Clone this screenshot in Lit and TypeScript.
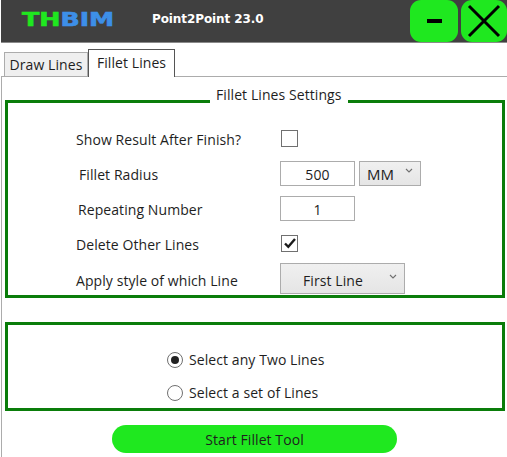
import {LitElement, html, css} from 'lit';
import {customElement} from 'lit/decorators.js';

const chevron = html`<svg class="chevron" width="8" height="5" viewBox="0 0 8 5"><path d="M1 1 L4 4 L7 1" fill="none" stroke="#707070" stroke-width="1.1"/></svg>`;

@customElement('app-root')
export class AppRoot extends LitElement {
    static styles = css`
        :host {
            display: block;
            position: relative;
            width: 507px;
            height: 457px;
            overflow: hidden;
            background: #fff;
            font-family: "Open Sans", "Noto Sans", sans-serif;
            font-size: 14px;
            letter-spacing: 0.08px;
            color: #1e1e1e;
        }

        .header {
            display: flex;
            align-items: stretch;
            height: 42px;
            margin-left: 1px;
            background: #404040;
            border-bottom: 1px solid #8a8a8a;
        }

        .logo {
            width: 90px;
            margin: 8px 0 0 21px;
            font-family: "DejaVu Sans", sans-serif;
            font-weight: 700;
            font-size: 19px;
            line-height: 22px;
            letter-spacing: 0;
            white-space: nowrap;
            transform: scaleX(1.33);
            transform-origin: left top;
            color: #1fe81f;
            -webkit-text-stroke: 0.6px currentColor;
        }

        .logo span {
            color: #3d8fe8;
        }

        .title {
            margin: 11px 0 0 40px;
            font-family: "DejaVu Sans", sans-serif;
            font-weight: 700;
            font-size: 12px;
            line-height: 17px;
            letter-spacing: -0.1px;
            color: #fff;
        }

        .win-buttons {
            display: flex;
            gap: 3px;
            margin-left: auto;
        }

        .win-btn {
            display: flex;
            align-items: center;
            justify-content: center;
            height: 42px;
            background: #1fe81f;
            border-radius: 11px;
        }

        .win-btn.min {
            width: 48px;
        }

        .win-btn.close {
            width: 46px;
        }

        .tabs {
            display: flex;
            align-items: flex-end;
            height: 33px;
            padding-left: 3px;
            border-bottom: 1px solid #acacac;
            margin-left: 1px;
        }

        .tab {
            box-sizing: border-box;
            height: 24px;
            width: 84px;
            border: 1px solid #acacac;
            border-bottom: none;
            background: #efefef;
            text-align: center;
            line-height: 24px;
        }

        .tab.active {
            position: relative;
            top: 1px;
            height: 28px;
            width: 87px;
            border-color: #555;
            background: #fff;
            line-height: 26px;
        }

        .panel {
            box-sizing: border-box;
            height: 380px;
            margin-left: 1px;
            padding: 8px 2px 0 3px;
            border-left: 1px solid #acacac;
        }

        fieldset {
            box-sizing: border-box;
            height: 213px;
            margin: 0;
            padding: 3px 0 0 0;
            border: 3px solid #0a7d0a;
            min-width: 0;
        }

        legend {
            margin-left: 202px;
            padding: 0 6px 14px;
            line-height: 19px;
        }

        .rows {
            display: grid;
            grid-template-columns: 272px 1fr;
            grid-auto-rows: 35px;
            align-items: center;
        }

        .label {
            padding-left: 68px;
            padding-top: 1px;
        }

        .label.in3 {
            padding-left: 71px;
        }

        .label.in2 {
            padding-left: 70px;
        }

        .label.low {
            padding-top: 3px;
        }

        .controls {
            display: flex;
            gap: 4px;
            align-items: center;
        }

        input[type="text"] {
            box-sizing: border-box;
            width: 75px;
            height: 25px;
            padding: 1px 0 0;
            border: 1px solid #acacac;
            outline: none;
            background: #fff;
            font: inherit;
            letter-spacing: inherit;
            color: inherit;
            text-align: center;
        }

        .check {
            box-sizing: border-box;
            display: flex;
            align-items: center;
            justify-content: center;
            width: 17px;
            height: 17px;
            margin-left: 1px;
            border: 1px solid #707070;
            background: #fff;
        }

        .select {
            box-sizing: border-box;
            display: flex;
            align-items: center;
            position: relative;
            height: 25px;
            width: 62px;
            padding: 1px 0 0 7px;
            border: 1px solid #acacac;
            background: linear-gradient(#f0f0f0, #e5e5e5);
        }

        .select.unit {
            font-size: 15px;
        }

        .select.wide {
            width: 125px;
            height: 31px;
            padding: 3px 0 0 22px;
        }

        .chevron {
            position: absolute;
            right: 7px;
            top: 6px;
        }

        .select.wide .chevron {
            right: 7px;
            top: 10px;
        }

        .options {
            box-sizing: border-box;
            display: flex;
            flex-direction: column;
            gap: 13px;
            height: 89px;
            margin-top: 24px;
            padding: 25px 0 0 159px;
            border: 3px solid #0a7d0a;
        }

        .radio-row {
            display: flex;
            align-items: center;
            gap: 6px;
            height: 20px;
        }

        .radio-row span:last-child {
            padding-bottom: 2px;
        }

        .radio {
            box-sizing: border-box;
            display: flex;
            align-items: center;
            justify-content: center;
            width: 16px;
            height: 16px;
            border: 1px solid #707070;
            border-radius: 50%;
            background: #fff;
        }

        .radio.on::after {
            content: "";
            width: 8px;
            height: 8px;
            border-radius: 50%;
            background: #222;
        }

        .start {
            display: block;
            box-sizing: border-box;
            width: 285px;
            height: 28px;
            margin: 14px 0 0 107px;
            border: none;
            border-radius: 14px;
            background: #1fe81f;
            font: inherit;
            letter-spacing: inherit;
            color: inherit;
            padding: 0;
        }

        .grip {
            position: absolute;
            right: 0;
            bottom: 0;
        }
    `;

    renderGrip() {
        const dots = [];
        for (let row = 0; row < 4; row++) {
            for (let col = 3 - row; col < 4; col++) {
                dots.push(html`<rect x="${col * 3 + 1}" y="${row * 3 + 1}" width="2" height="2" fill="#c0c4d8"/>`);
            }
        }
        return html`<svg class="grip" width="13" height="13" viewBox="0 0 13 13">${dots}</svg>`;
    }

    render() {
        return html`
            <div class="header">
                <div class="logo">TH<span>BIM</span></div>
                <div class="title">Point2Point 23.0</div>
                <div class="win-buttons">
                    <div class="win-btn min">
                        <svg width="15" height="4" viewBox="0 0 15 4"><rect width="15" height="4" fill="#000"/></svg>
                    </div>
                    <div class="win-btn close">
                        <svg width="34" height="34" viewBox="0 0 34 34"><path d="M2 2 L32 32 M32 2 L2 32" stroke="#000" stroke-width="3" fill="none"/></svg>
                    </div>
                </div>
            </div>
            <div class="tabs">
                <div class="tab">Draw Lines</div>
                <div class="tab active">Fillet Lines</div>
            </div>
            <div class="panel">
                <fieldset>
                    <legend>Fillet Lines Settings</legend>
                    <div class="rows">
                        <div class="label">Show Result After Finish?</div>
                        <div class="check"></div>
                        <div class="label in3">Fillet Radius</div>
                        <div class="controls">
                            <input type="text" value="500"/>
                            <div class="select unit">MM${chevron}</div>
                        </div>
                        <div class="label in2">Repeating Number</div>
                        <div class="controls"><input type="text" value="1"/></div>
                        <div class="label">Delete Other Lines</div>
                        <div class="check">
                            <svg width="12" height="11" viewBox="0 0 12 11"><path d="M1 5.5 L4.3 8.8 L11 1" fill="none" stroke="#1a1a1a" stroke-width="2.4"/></svg>
                        </div>
                        <div class="label low">Apply style of which Line</div>
                        <div class="select wide">First Line${chevron}</div>
                    </div>
                </fieldset>
                <div class="options">
                    <div class="radio-row"><span class="radio on"></span><span>Select any Two Lines</span></div>
                    <div class="radio-row"><span class="radio"></span><span>Select a set of Lines</span></div>
                </div>
                <button class="start">Start Fillet Tool</button>
            </div>
            ${this.renderGrip()}
        `;
    }
}
